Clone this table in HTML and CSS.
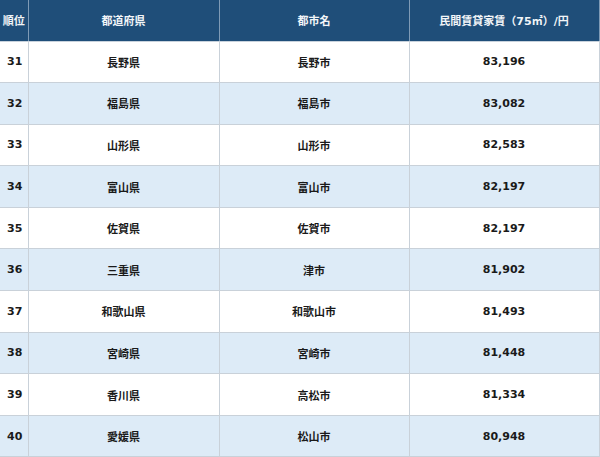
FILE: index.html
```html
<!DOCTYPE html>
<html lang="ja">
<head>
<meta charset="utf-8">
<link rel="stylesheet" href="styles.css">
</head>
<body>
<table class="rank">
  <colgroup>
    <col class="c-rank"><col class="c-pref"><col class="c-city"><col class="c-rent">
  </colgroup>
  <thead>
    <tr><th class="rk">順位</th><th>都道府県</th><th>都市名</th><th>民間賃貸家賃（75㎡）/円</th></tr>
  </thead>
  <tbody>
    <tr><td class="rk">31</td><td>長野県</td><td>長野市</td><td class="num">83,196</td></tr>
    <tr><td class="rk">32</td><td>福島県</td><td>福島市</td><td class="num">83,082</td></tr>
    <tr><td class="rk">33</td><td>山形県</td><td>山形市</td><td class="num">82,583</td></tr>
    <tr><td class="rk">34</td><td>富山県</td><td>富山市</td><td class="num">82,197</td></tr>
    <tr><td class="rk">35</td><td>佐賀県</td><td>佐賀市</td><td class="num">82,197</td></tr>
    <tr><td class="rk">36</td><td>三重県</td><td>津市</td><td class="num">81,902</td></tr>
    <tr><td class="rk">37</td><td>和歌山県</td><td>和歌山市</td><td class="num">81,493</td></tr>
    <tr><td class="rk">38</td><td>宮崎県</td><td>宮崎市</td><td class="num">81,448</td></tr>
    <tr><td class="rk">39</td><td>香川県</td><td>高松市</td><td class="num">81,334</td></tr>
    <tr><td class="rk">40</td><td>愛媛県</td><td>松山市</td><td class="num">80,948</td></tr>
  </tbody>
</table>
</body>
</html>
```

FILE: styles.css
```css
html, body {
  margin: 0;
  padding: 0;
  background: #ffffff;
}
.rank {
  border-collapse: collapse;
  table-layout: fixed;
  width: 599px;
  font-family: "DejaVu Sans", "Noto Sans CJK JP", sans-serif;
  font-weight: bold;
  font-size: 11px;
  color: #1a1a1a;
}
.c-rank { width: 28px; }
.c-pref { width: 191px; }
.c-city { width: 190px; }
.c-rent { width: 190px; }
.rank th {
  background: #1f4e79;
  color: #f2f5f8;
  height: 41px;
  padding: 0;
  text-align: center;
  font-weight: bold;
  font-size: 11px;
  border-left: 1px solid #7f9bb6;
  border-right: 1px solid #7f9bb6;
  border-bottom: 1px solid #c8d2dc;
  box-sizing: border-box;
}
.rank th:first-child { border-left: none; }
.rank td {
  height: 41.6px;
  padding: 0;
  text-align: center;
  border: 1px solid #c9d1d9;
  box-sizing: border-box;
}
.rank td:first-child { border-left: none; }
.rank td.rk {
  text-align: left;
  padding-left: 7px;
}
.rank th.rk { padding: 0; }
.rank tbody tr:nth-child(even) td {
  background: #ddebf7;
}
```
